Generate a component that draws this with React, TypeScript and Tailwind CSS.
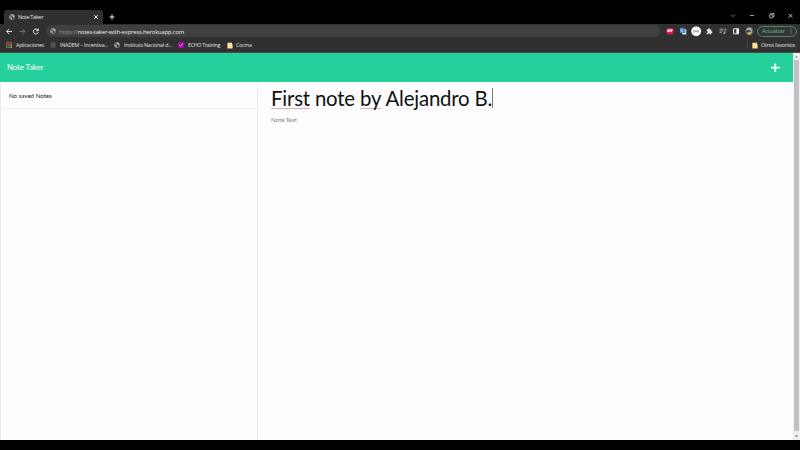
import React from "react";

function Globe() {
  return (
    <svg viewBox="0 0 16 16" className="h-[6px] w-[6px] shrink-0">
      <circle cx="8" cy="8" r="7" fill="#303133" stroke="#b3b6b9" strokeWidth="1.6" />
      <path d="M2 6l4 1 2 3-1 4-3-2zM7 1l6 2 1 5-3 1-2-3-3-1z" fill="#b3b6b9" />
    </svg>
  );
}

function Folder() {
  return (
    <svg viewBox="0 0 6 7" className="h-[7px] w-[6px] shrink-0">
      <path d="M.4.8h4.6v1.2l.6.6v3.8H.4z" fill="#ffe293" />
    </svg>
  );
}

function TitleBar() {
  return (
    <div className="flex h-6 items-end bg-black">
      <div className="ml-1 flex h-[14px] w-[99px] items-center rounded-t-[3px] bg-[#303031] pl-[5px] pr-[4px]">
        <Globe />
        <span className="ml-[3px] mt-px w-[60px] whitespace-nowrap text-[5.4px] tracking-[-0.26px] text-[#e4e4e4]">Note Taker</span>
        <svg viewBox="0 0 6 6" className="ml-auto h-[6px] w-[6px]" stroke="#eee" strokeWidth="1">
          <path d="M1.2 1.2l3.6 3.6M4.8 1.2L1.2 4.8" />
        </svg>
      </div>
      <svg viewBox="0 0 6 6" className="mb-[4px] ml-[6px] h-[6px] w-[6px]" stroke="#eee" strokeWidth="1">
        <path d="M3 .5v5M.5 3h5" />
      </svg>
      <svg viewBox="0 0 80 10" className="mb-[4px] ml-auto h-[10px] w-[80px]" fill="none" stroke="#c4c4c4" strokeWidth=".8">
        <path d="M11 4.7l2 2 2-2" stroke="#909090" />
        <path d="M30 5.5h4" />
        <path d="M49.7 4.8h3v3h-3zM50.7 4.5v-1h3.3v3.3h-1" />
        <path d="M68.6 3.9l3.8 3.8M72.4 3.9l-3.8 3.8" stroke="#e5e5e5" />
      </svg>
    </div>
  );
}

function Extensions() {
  return (
    <svg viewBox="0 0 94 12" className="h-3 w-[94px] shrink-0">
      <path d="M4.1 3.2h3.8l1.8 1.4v3.2L7.9 9.3H4.1L2.3 7.8V4.6z" fill="#e41a4a" />
      <text x="3.2" y="7.2" fontSize="2.7" fontWeight="bold" fill="#fff" textLength="5.6">ABP</text>
      <path d="M16.7 4.3h5.6v5.1h-3.9z" fill="#dce1e8" />
      <path d="M16 2.8h3.7l1.4 5.3H16z" fill="#4788e8" />
      <path d="M18.7 4.6a1.1 1.1 0 1 0 .1 1.5h-.9" fill="none" stroke="#fff" strokeWidth=".5" />
      <path d="M20.2 5.2h2M21.4 5.3l-1.2 2M20.3 6l1.6 1.7" fill="none" stroke="#5f6a78" strokeWidth=".5" />
      <circle cx="32.2" cy="6.3" r="4.9" fill="#fff" />
      <path d="M30.2 4.9q-1.2 1.4 0 2.8M34.2 4.9q1.2 1.4 0 2.8M31.1 7.2V5.5l1.1 1.2 1.1-1.2v1.7" fill="none" stroke="#444" strokeWidth=".5" />
      <path d="M42.7 4.6h1.4c-.3-1.8 2-1.8 1.7 0h1.5v1.6c1.7-.3 1.7 2 0 1.7v1.4h-1.6c0-1.5-1.6-1.5-1.6 0h-1.4V7.7c1.5 0 1.5-1.5 0-1.5z" fill="#e2e2e2" />
      <path d="M55.5 4.2h4M55.5 6h3.4M55.5 7.7h2.3M61 8.2V4.2h1.5" fill="none" stroke="#bbb" strokeWidth=".8" />
      <circle cx="60.3" cy="8.1" r=".9" fill="#bbb" />
      <path d="M69.6 3.8h5v5h-5z" fill="none" stroke="#eee" />
      <path d="M72.3 3.8h2.3v5h-2.3z" fill="#eee" />
      <circle cx="85.3" cy="6" r="4.3" fill="#5d5955" />
      <path d="M82.2 4.5q3-3.2 5.7-.6l-1.3 1.3-1.5-1-1.6 1.5z" fill="#bbb9c2" />
      <path d="M83 8.3l2-1.5 1.6.7 1.5-1.2-.8 2.6-2 1z" fill="#c7b669" />
      <circle cx="84.3" cy="6.2" r="1" fill="#292c39" />
      <circle cx="87.3" cy="5.8" r=".8" fill="#d0c9bc" />
    </svg>
  );
}

function Toolbar() {
  return (
    <div className="flex h-[14px] items-center bg-[#303031]">
      <svg viewBox="0 0 46 14" className="h-[14px] w-[46px] shrink-0" fill="none" strokeWidth=".9">
        <path d="M12 7.5H6.6M9.2 4.9L6.6 7.5l2.6 2.6" stroke="#eee" />
        <path d="M19.6 7.5H25M22.4 4.9L25 7.5l-2.6 2.6" stroke="#77787a" />
        <path d="M37.9 6A2.5 2.5 0 1 0 38.2 8.4M38.3 4.6v2.1h-2.1" stroke="#eee" strokeWidth="1" />
      </svg>
      <div className="flex h-3 w-[614px] shrink-0 items-center rounded-full bg-[#404041] pl-1">
        <Globe />
        <span className="ml-[3px] mt-px whitespace-nowrap text-[5.9px] leading-[8px] tracking-[-0.18px] text-[#eee]">
          <span className="text-[#929394]">https://</span>notes-taker-with-express.herokuapp.com
        </span>
      </div>
      <div className="ml-[4px] flex"><Extensions /></div>
      <div className="ml-[-1px] flex h-[11px] w-[40px] shrink-0 items-center justify-between rounded-full border border-[#5b8269] bg-[#303536] pl-[4px] pr-[4px] text-[5.4px] tracking-[-0.2px] text-[#79b58c]">
        <span className="mt-px">Actualizar</span>
        <svg viewBox="0 0 2 6" className="h-[6px] w-[2px]" fill="#82ba93">
          <circle cx="1" cy="1" r=".6" /><circle cx="1" cy="3" r=".6" /><circle cx="1" cy="5" r=".6" />
        </svg>
      </div>
    </div>
  );
}

function Bookmarks() {
  return (
    <div className="flex h-[15px] items-center border-b border-[#484b4a] bg-[#303031] pl-[6px] text-[5.3px] tracking-[-0.2px] text-[#e2e2e2]">
      <svg viewBox="0 0 6 6" className="h-[6px] w-[6px] shrink-0">
        <path d="M0 0h1.6v1.6H0zM2.2 0h1.6v1.6H2.2zM4.4 0H6v1.6H4.4zM0 2.2h1.6v1.6H0z" fill="#d75345" />
        <path d="M0 4.4h1.6V6H0zM2.2 4.4h1.6V6H2.2z" fill="#4f9c5d" />
        <path d="M2.2 2.2h1.6v1.6H2.2z" fill="#5683bc" />
        <path d="M4.4 2.2H6v1.6H4.4zM4.4 4.4H6V6H4.4z" fill="#d5a540" />
      </svg>
      <span className="ml-[4px] mt-px w-[34px] whitespace-nowrap">Aplicaciones</span>
      <span className="h-[6px] w-[6px] shrink-0 rounded-full bg-[#515152]" />
      <span className="ml-[4px] mt-px w-[54px] whitespace-nowrap">INADEM – Incentiva...</span>
      <Globe />
      <span className="ml-[4px] mt-px w-[54px] whitespace-nowrap">Instituto Nacional d...</span>
      <svg viewBox="0 0 6 6" className="h-[6px] w-[6px] shrink-0">
        <rect width="6" height="6" rx="1" fill="#a50ba2" />
        <path d="M1.5 3l1 1.4 2-3" fill="none" stroke="#f4caf0" strokeWidth=".7" />
      </svg>
      <span className="ml-[4px] mt-px w-[39px] whitespace-nowrap tracking-[-0.28px]">ECHO Training</span>
      <Folder />
      <span className="ml-[3px] mt-px tracking-[-0.15px]">Cocina</span>
      <span className="ml-auto h-2 w-px bg-[#444]" />
      <span className="ml-[4px] flex items-center"><Folder /></span>
      <span className="ml-[3px] mt-px w-[39px] whitespace-nowrap">Otros favoritos</span>
    </div>
  );
}

function Scrollbar() {
  return (
    <div className="flex w-[7px] shrink-0 flex-col items-center bg-[#f0f0f0]">
      <svg viewBox="0 0 7 7" className="h-[7px] w-[7px]"><path d="M2 4.4l1.5-1.7L5 4.4z" fill="#888" /></svg>
      <div className="w-[5px] flex-1 bg-[#c1c1c1]" />
      <svg viewBox="0 0 7 9" className="h-[9px] w-[7px]"><path d="M2 4.5l1.5 1.7L5 4.5z" fill="#555" /></svg>
    </div>
  );
}

export default function App() {
  return (
    <div className="flex h-[450px] w-[800px] flex-col overflow-hidden bg-black font-['Open_Sans','Noto_Sans',sans-serif]">
      <TitleBar />
      <Toolbar />
      <Bookmarks />
      <div className="flex h-[387px] shrink-0 font-['Lato',sans-serif]">
        <div className="flex w-[793px] flex-col bg-[#fdfdff]">
          <header className="flex h-[29px] items-center justify-between bg-[#26d09c] pl-[7px] pr-[13px] text-white">
            <span className="mt-px text-[7.7px]">Note Taker</span>
            <svg viewBox="0 0 10 10" className="h-[10px] w-[10px]" fill="none" stroke="#f0fff9" strokeWidth="1.8">
              <path d="M5.3 .6v8.4M1 4.7h8.6" />
            </svg>
          </header>
          <div className="flex flex-1">
            <aside className="w-[258px] border-l border-r border-[#e9ecec]">
              <div className="flex h-[27px] items-center border-b border-[#edefef] pl-2 pt-px text-[6.15px] text-[#212529]">No saved Notes</div>
            </aside>
            <main className="pl-[13px] pt-[4px]">
              <h1 className="flex h-[24px] items-center whitespace-pre text-[20.4px] leading-[24px] tracking-[-0.2px] text-[#111]">
                <span className="flex h-[21px] items-center border-b border-[#eba9b4]">First</span>
                <span> note </span>
                <span className="flex h-[21px] items-center border-b border-[#eba9b4]">by</span>
                <span> Alejandro B.</span>
                <span className="h-5 w-px bg-[#777]" />
              </h1>
              <p className="mt-[6px] text-[6.1px] leading-[8px] text-[#7b8086]">Note Text</p>
            </main>
          </div>
        </div>
        <Scrollbar />
      </div>
    </div>
  );
}
